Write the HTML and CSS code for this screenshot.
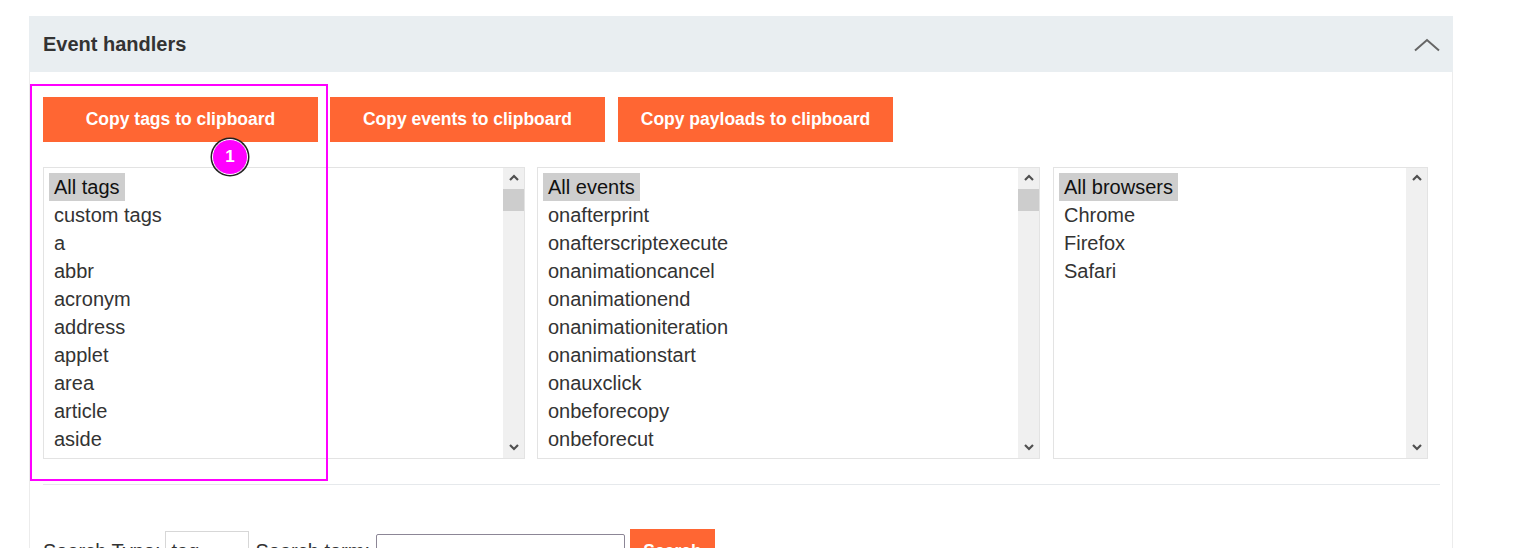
FILE: index.html
```html
<!DOCTYPE html>
<html lang="en">
<head>
<meta charset="utf-8">
<title>Event handlers</title>
<link rel="stylesheet" href="styles.css">
</head>
<body>
<div class="page">
  <section class="panel">
    <header class="panel-head">
      <h2 class="panel-title">Event handlers</h2>
      <svg class="chev" width="26" height="14" viewBox="0 0 26 14"><path d="M1 12.5 L13 2 L25 12.5" fill="none" stroke="#666" stroke-width="2"/></svg>
    </header>
    <div class="panel-body">
      <div class="btn-row">
        <button class="btn">Copy tags to clipboard</button>
        <button class="btn">Copy events to clipboard</button>
        <button class="btn">Copy payloads to clipboard</button>
      </div>
      <div class="lists">
        <div class="list list-tags">
          <ul class="items">
            <li class="sel"><span>All tags</span></li>
            <li><span>custom tags</span></li>
            <li><span>a</span></li>
            <li><span>abbr</span></li>
            <li><span>acronym</span></li>
            <li><span>address</span></li>
            <li><span>applet</span></li>
            <li><span>area</span></li>
            <li><span>article</span></li>
            <li><span>aside</span></li>
          </ul>
          <div class="sb">
            <svg class="arr" width="22" height="21" viewBox="0 0 22 21"><path d="M7 12 L11 8 L15 12" fill="none" stroke="#505050" stroke-width="2.2"/></svg>
            <div class="thumb"></div>
            <div class="track"></div>
            <svg class="arr" width="22" height="21" viewBox="0 0 22 21"><path d="M7 8 L11 12 L15 8" fill="none" stroke="#505050" stroke-width="2.2"/></svg>
          </div>
        </div>
        <div class="list list-events">
          <ul class="items">
            <li class="sel"><span>All events</span></li>
            <li><span>onafterprint</span></li>
            <li><span>onafterscriptexecute</span></li>
            <li><span>onanimationcancel</span></li>
            <li><span>onanimationend</span></li>
            <li><span>onanimationiteration</span></li>
            <li><span>onanimationstart</span></li>
            <li><span>onauxclick</span></li>
            <li><span>onbeforecopy</span></li>
            <li><span>onbeforecut</span></li>
          </ul>
          <div class="sb">
            <svg class="arr" width="22" height="21" viewBox="0 0 22 21"><path d="M7 12 L11 8 L15 12" fill="none" stroke="#505050" stroke-width="2.2"/></svg>
            <div class="thumb"></div>
            <div class="track"></div>
            <svg class="arr" width="22" height="21" viewBox="0 0 22 21"><path d="M7 8 L11 12 L15 8" fill="none" stroke="#505050" stroke-width="2.2"/></svg>
          </div>
        </div>
        <div class="list list-browsers">
          <ul class="items">
            <li class="sel"><span>All browsers</span></li>
            <li><span>Chrome</span></li>
            <li><span>Firefox</span></li>
            <li><span>Safari</span></li>
          </ul>
          <div class="sb">
            <svg class="arr" width="22" height="21" viewBox="0 0 22 21"><path d="M7 12 L11 8 L15 12" fill="none" stroke="#505050" stroke-width="2.2"/></svg>
            <div class="track"></div>
            <svg class="arr" width="22" height="21" viewBox="0 0 22 21"><path d="M7 8 L11 12 L15 8" fill="none" stroke="#505050" stroke-width="2.2"/></svg>
          </div>
        </div>
      </div>
      <hr class="sep">
      <div class="search-row">
        <span class="lbl">Search Type:</span>
        <div class="fake-select"><span>tag</span><svg width="12" height="8" viewBox="0 0 12 8"><path d="M2 2 L6 6 L10 2" fill="none" stroke="#333" stroke-width="1.6"/></svg></div>
        <span class="lbl">Search term:</span>
        <input class="term" type="text">
        <button class="btn btn-search">Search</button>
      </div>
    </div>
  </section>
  <div class="annot"></div>
  <div class="badge">1</div>
</div>
</body>
</html>
```

FILE: styles.css
```css
html, body {
  margin: 0;
  padding: 0;
  background: #fff;
  overflow: hidden;
}
body {
  font-family: "Liberation Sans", Arial, sans-serif;
  color: #333;
  width: 1524px;
  height: 548px;
}
.page {
  position: relative;
  padding: 16px 0 0 29px;
}
.panel {
  width: 1424px;
  box-sizing: border-box;
}
.panel-head {
  height: 56px;
  background: #e9eef1;
  display: flex;
  align-items: center;
  justify-content: space-between;
  padding: 0 13px 0 14px;
}
.panel-title {
  margin: 0;
  font-size: 20px;
  font-weight: bold;
  color: #333;
}
.chev {
  display: block;
  margin-top: 2px;
}
.panel-body {
  border-left: 1px solid #ececec;
  border-right: 1px solid #ececec;
  padding: 25px 12px 0 13px;
}
.btn-row {
  display: flex;
  gap: 12px;
}
.btn {
  width: 275px;
  height: 45px;
  border: 0;
  background: #ff6633;
  color: #fff;
  font-family: "Liberation Sans", Arial, sans-serif;
  font-weight: bold;
  font-size: 17.5px;
  padding: 0;
  cursor: pointer;
}
.btn-row .btn:last-child {
  margin-left: 1px;
}
.lists {
  display: flex;
  gap: 12px;
  margin-top: 25px;
}
.list-browsers { margin-left: 1px; }
.list {
  display: flex;
  height: 292px;
  box-sizing: border-box;
  border: 1px solid #e3e3e3;
  background: #fff;
}
.list-tags { width: 482px; }
.list-events { width: 503px; }
.list-browsers { width: 375px; }
.items {
  list-style: none;
  margin: 0;
  padding: 5px 0 0 5px;
  flex: 1;
  overflow: hidden;
}
.items li {
  height: 28px;
  font-size: 20px;
  line-height: 28px;
  color: #333;
  white-space: nowrap;
}
.items li span {
  display: inline-block;
  padding: 0 5px;
}
.items li.sel span {
  background: #cecece;
  color: #111;
}
.sb {
  width: 21px;
  background: #f0f0f0;
  display: flex;
  flex-direction: column;
}
.arr {
  display: block;
  flex: none;
}
.thumb {
  height: 22px;
  background: #cdcdcd;
  flex: none;
}
.track {
  flex: 1;
}
.sep {
  border: 0;
  border-top: 1px solid #e6e9ec;
  margin: 25px 0 0;
}
.search-row {
  display: flex;
  align-items: center;
  margin-top: 44px;
  font-size: 20px;
  height: 45px;
}
.lbl {
  color: #333;
  white-space: nowrap;
}
.fake-select {
  width: 84px;
  height: 41px;
  box-sizing: border-box;
  border: 1px solid #d7d7d7;
  margin: 0 6px 0 5px;
  display: flex;
  align-items: center;
  justify-content: space-between;
  padding: 0 6px 0 5px;
  font-size: 20px;
}
.term {
  width: 249px;
  height: 35px;
  box-sizing: border-box;
  border: 1px solid #8c8696;
  border-radius: 2px;
  margin: 0 5px 0 6px;
  font-size: 18px;
}
.btn-search {
  width: 85px;
}
.annot {
  position: absolute;
  left: 30px;
  top: 84px;
  width: 298px;
  height: 397px;
  box-sizing: border-box;
  border: 2px solid #ff00ff;
  pointer-events: none;
}
.badge {
  position: absolute;
  left: 212px;
  top: 139px;
  width: 36px;
  height: 36px;
  box-sizing: border-box;
  border-radius: 50%;
  background: #ff00ff;
  border: 1px solid #fff;
  box-shadow: 0 0 0 1.5px #222;
  color: #fff;
  font-weight: bold;
  font-size: 17px;
  display: flex;
  align-items: center;
  justify-content: center;
}
```
